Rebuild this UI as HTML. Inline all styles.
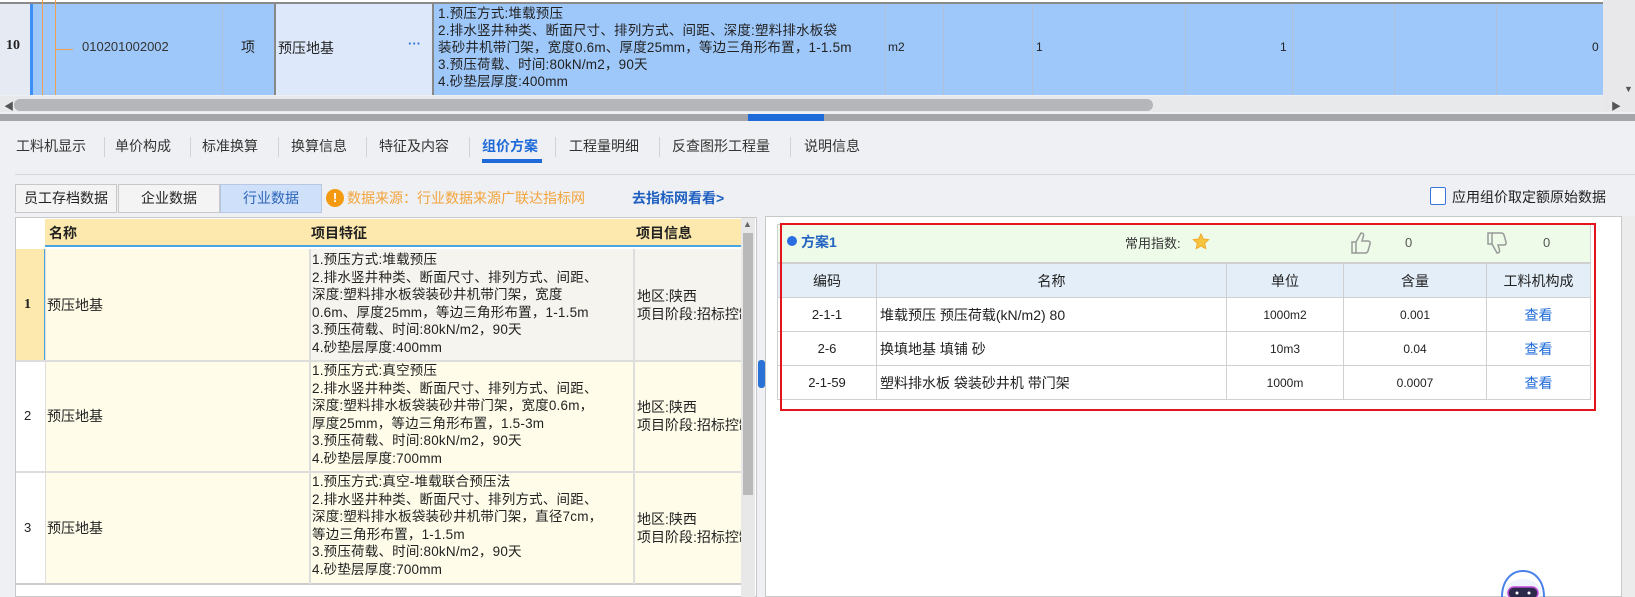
<!DOCTYPE html>
<html><head><meta charset="utf-8"><style>
*{margin:0;padding:0;box-sizing:border-box}
body{width:1635px;height:597px;overflow:hidden;background:#eef0f3;font-family:"Liberation Sans","Noto Sans CJK SC",sans-serif;font-size:13px;color:#222;position:relative}
.a{position:absolute}
.ft{font-size:13.5px;line-height:17.5px;white-space:nowrap;letter-spacing:0.2px}
.tab{position:absolute;top:136px;font-size:14px;color:#333}
.sep{position:absolute;top:137px;width:1px;height:20px;background:#cfd3d8}
table{border-collapse:collapse}
</style></head><body>
<!-- top grid -->
<div class="a" style="left:0;top:0;width:1603px;height:4px;background:#fff;border-bottom:2px solid #8a8a8a"></div>
<div class="a" style="left:0;top:4px;width:1603px;height:91px;background:#9fc8fa"></div>
<div class="a" style="left:0;top:4px;width:30px;height:91px;background:#e6ebf3"></div>
<div class="a" style="left:30px;top:4px;width:3px;height:91px;background:#3d8ff5"></div>
<div class="a" style="left:6px;top:38px;font-weight:bold;font-family:'Liberation Serif',serif;font-size:14px">10</div>
<div class="a" style="left:42px;top:0;width:1px;height:95px;background:#f0a050"></div>
<div class="a" style="left:55px;top:0;width:1px;height:95px;background:#f0a050"></div>
<div class="a" style="left:55px;top:49px;width:18px;height:1px;background:#f0a050"></div>
<div class="a" style="left:82px;top:39px;font-size:13px;color:#333">010201002002</div>
<div class="a" style="left:222px;top:4px;width:1px;height:91px;background:#b0c0d8"></div>
<div class="a" style="left:241px;top:37px;font-size:14px">项</div>
<div class="a" style="left:274px;top:4px;width:160px;height:91px;background:#dde8fb;border-left:2px solid #888;border-right:2px solid #888"></div>
<div class="a" style="left:278px;top:38px;font-size:14px">预压地基</div>
<div class="a" style="left:408px;top:36px;color:#3070d0;font-weight:bold">···</div>
<div class="a ft" style="left:438px;top:5px;line-height:17px;font-size:13.5px">1.预压方式:堆载预压<br>2.排水竖井种类、断面尺寸、排列方式、间距、深度:塑料排水板袋<br>装砂井机带门架，宽度0.6m、厚度25mm，等边三角形布置，1-1.5m<br>3.预压荷载、时间:80kN/m2，90天<br>4.砂垫层厚度:400mm</div>
<div class="a" style="left:885px;top:4px;width:1px;height:91px;background:#b0c0d8"></div>
<div class="a" style="left:888px;top:40px;font-size:12px">m2</div>
<div class="a" style="left:943px;top:4px;width:1px;height:91px;background:#b0c0d8"></div>
<div class="a" style="left:1032px;top:4px;width:1px;height:91px;background:#b0c0d8"></div>
<div class="a" style="left:1036px;top:40px;font-size:12px">1</div>
<div class="a" style="left:1185px;top:4px;width:1px;height:91px;background:#b0c0d8"></div>
<div class="a" style="left:1280px;top:40px;font-size:12px">1</div>
<div class="a" style="left:1292px;top:4px;width:1px;height:91px;background:#b0c0d8"></div>
<div class="a" style="left:1394px;top:4px;width:1px;height:91px;background:#b0c0d8"></div>
<div class="a" style="left:1496px;top:4px;width:1px;height:91px;background:#b0c0d8"></div>
<div class="a" style="left:1592px;top:40px;font-size:12px">0</div>
<div class="a" style="left:1603px;top:0;width:32px;height:112px;background:#e8e8ea"></div>
<div class="a" style="left:1624px;top:84px;color:#555;font-size:9px">▼</div>
<!-- h scrollbar -->
<div class="a" style="left:0;top:96px;width:1603px;height:16px;background:#e8e9eb"></div>
<div class="a" style="left:4px;top:98px;color:#555;font-size:10px">◀</div>
<div class="a" style="left:14px;top:99px;width:1139px;height:12px;background:#b4b6b9;border-radius:6px"></div>
<div class="a" style="left:1611px;top:98px;color:#555;font-size:10px">▶</div>
<div class="a" style="left:0;top:114px;width:1635px;height:7px;background:#a3a5a8"></div>
<div class="a" style="left:748px;top:114px;width:76px;height:7px;background:#1e6ad8"></div>
<!-- tabs -->
<div class="tab" style="left:16px">工料机显示</div><div class="sep" style="left:104px"></div>
<div class="tab" style="left:115px">单价构成</div><div class="sep" style="left:190px"></div>
<div class="tab" style="left:202px">标准换算</div><div class="sep" style="left:278px"></div>
<div class="tab" style="left:291px">换算信息</div><div class="sep" style="left:366px"></div>
<div class="tab" style="left:379px">特征及内容</div><div class="sep" style="left:469px"></div>
<div class="tab" style="left:482px;color:#1e6ad8;font-weight:bold">组价方案</div>
<div class="a" style="left:482px;top:159px;width:60px;height:4px;background:#1e6ad8"></div>
<div class="sep" style="left:555px"></div>
<div class="tab" style="left:569px">工程量明细</div><div class="sep" style="left:659px"></div>
<div class="tab" style="left:672px">反查图形工程量</div><div class="sep" style="left:790px"></div>
<div class="tab" style="left:804px">说明信息</div>
<div class="a" style="left:15px;top:174px;width:1620px;height:1px;background:#d4d7db"></div>
<!-- buttons -->
<div class="a" style="left:15px;top:184px;width:102px;height:29px;background:#f4f4f4;border:1px solid #c8c8c8;text-align:center;line-height:27px;font-size:14px">员工存档数据</div>
<div class="a" style="left:118px;top:184px;width:102px;height:29px;background:#f4f4f4;border:1px solid #c8c8c8;text-align:center;line-height:27px;font-size:14px">企业数据</div>
<div class="a" style="left:220px;top:184px;width:102px;height:29px;background:#cfe0fb;border:1px solid #b8c8e0;text-align:center;line-height:27px;font-size:14px;color:#2b64b8">行业数据</div>
<div class="a" style="left:326px;top:189px;width:18px;height:18px;border-radius:50%;background:#f39a12;color:#fff;font-weight:bold;text-align:center;line-height:18px;font-size:13px">!</div>
<div class="a" style="left:347px;top:188px;font-size:14px;color:#f3a43c">数据来源：行业数据来源广联达指标网</div>
<div class="a" style="left:632px;top:188px;font-size:14px;color:#1e5fc0;font-weight:bold">去指标网看看&gt;</div>
<div class="a" style="left:1430px;top:187px;width:16px;height:18px;border:1.5px solid #3a78d8;border-radius:2px;background:#fff"></div>
<div class="a" style="left:1452px;top:187px;font-size:14px;color:#222">应用组价取定额原始数据</div>
<!-- left panel -->
<div class="a" style="left:15px;top:217px;width:742px;height:380px;background:#fff;border:1px solid #c8c8c8"></div>
<div class="a" style="left:45px;top:219px;width:696px;height:28px;background:#fde9ad;border-bottom:2px solid #4aa6e0"></div>
<div class="a" style="left:49px;top:223px;font-weight:bold;font-size:14px">名称</div>
<div class="a" style="left:311px;top:223px;font-weight:bold;font-size:14px">项目特征</div>
<div class="a" style="left:636px;top:223px;font-weight:bold;font-size:14px">项目信息</div>
<!-- row1 -->
<div class="a" style="left:16px;top:249px;width:29px;height:111px;background:#fde9ad"></div>
<div class="a" style="left:44px;top:249px;width:2px;height:111px;background:#4aa6e0"></div>
<div class="a" style="left:46px;top:249px;width:264px;height:111px;background:#fffbe6"></div>
<div class="a" style="left:310px;top:249px;width:431px;height:111px;background:#f5f4ef"></div>
<!-- row2/3 -->
<div class="a" style="left:46px;top:361px;width:695px;height:222px;background:#fffdea"></div>
<div class="a" style="left:16px;top:360px;width:725px;height:2px;background:#ddd"></div>
<div class="a" style="left:16px;top:471px;width:725px;height:2px;background:#ddd"></div>
<div class="a" style="left:16px;top:583px;width:725px;height:2px;background:#ccc"></div>
<div class="a" style="left:45px;top:249px;width:1px;height:335px;background:#ddd"></div>
<div class="a" style="left:309px;top:249px;width:2px;height:335px;background:#ddd"></div>
<div class="a" style="left:633px;top:249px;width:2px;height:335px;background:#ddd"></div>
<div class="a" style="left:24px;top:297px;font-weight:bold;font-family:'Liberation Serif',serif;font-size:14px">1</div>
<div class="a" style="left:24px;top:408px;font-size:13px">2</div>
<div class="a" style="left:24px;top:520px;font-size:13px">3</div>
<div class="a" style="left:47px;top:295px;font-size:14px">预压地基</div>
<div class="a" style="left:47px;top:406px;font-size:14px">预压地基</div>
<div class="a" style="left:47px;top:518px;font-size:14px">预压地基</div>
<div class="a ft" style="left:312px;top:251px">1.预压方式:堆载预压<br>2.排水竖井种类、断面尺寸、排列方式、间距、<br>深度:塑料排水板袋装砂井机带门架，宽度<br>0.6m、厚度25mm，等边三角形布置，1-1.5m<br>3.预压荷载、时间:80kN/m2，90天<br>4.砂垫层厚度:400mm</div>
<div class="a ft" style="left:312px;top:362px">1.预压方式:真空预压<br>2.排水竖井种类、断面尺寸、排列方式、间距、<br>深度:塑料排水板袋装砂井带门架，宽度0.6m，<br>厚度25mm，等边三角形布置，1.5-3m<br>3.预压荷载、时间:80kN/m2，90天<br>4.砂垫层厚度:700mm</div>
<div class="a ft" style="left:312px;top:473px">1.预压方式:真空-堆载联合预压法<br>2.排水竖井种类、断面尺寸、排列方式、间距、<br>深度:塑料排水板袋装砂井机带门架，直径7cm，<br>等边三角形布置，1-1.5m<br>3.预压荷载、时间:80kN/m2，90天<br>4.砂垫层厚度:700mm</div>
<div class="a" style="left:637px;top:287px;width:104px;overflow:hidden;white-space:nowrap;font-size:14px;line-height:18px">地区:陕西<br>项目阶段:招标控制</div>
<div class="a" style="left:637px;top:398px;width:104px;overflow:hidden;white-space:nowrap;font-size:14px;line-height:18px">地区:陕西<br>项目阶段:招标控制</div>
<div class="a" style="left:637px;top:510px;width:104px;overflow:hidden;white-space:nowrap;font-size:14px;line-height:18px">地区:陕西<br>项目阶段:招标控制</div>
<div class="a" style="left:741px;top:218px;width:14px;height:379px;background:#e8e8e8"></div>
<div class="a" style="left:743px;top:233px;width:10px;height:262px;background:#b9b9b9"></div>
<div class="a" style="left:743px;top:219px;font-size:9px;color:#666">▲</div>
<div class="a" style="left:758px;top:360px;width:7px;height:28px;background:#2a72d8;border-radius:3px"></div>
<!-- right panel -->
<div class="a" style="left:765px;top:216px;width:857px;height:381px;background:#fff;border:1px solid #c8c8c8"></div>
<div class="a" style="left:1622px;top:216px;width:13px;height:381px;background:#ececec"></div>
<div class="a" style="left:777px;top:224px;width:814px;height:39px;background:#eefbe9;border:1px solid #d0d0d0"></div>
<div class="a" style="left:787px;top:236px;width:10px;height:10px;border-radius:50%;background:#2a6ee0"></div>
<div class="a" style="left:801px;top:232px;font-weight:bold;color:#2364c0;font-size:14px">方案1</div>
<div class="a" style="left:1125px;top:233px;font-size:13px;color:#333">常用指数:</div>
<svg class="a" style="left:1192px;top:233px" width="18" height="18" viewBox="0 0 20 20"><path d="M10 1l2.6 5.6 6 .7-4.5 4.1 1.2 6-5.3-3-5.3 3 1.2-6L1.4 7.3l6-.7z" fill="#f8c540" stroke="#f1a526"/></svg>
<svg class="a" style="left:1350px;top:231px" width="22" height="24" viewBox="0 0 22 24" fill="none" stroke="#999" stroke-width="1.5"><path d="M2 11h4v11H2z"/><path d="M6 11l5-9c2 0 3 1 2.5 3L12 10h6c2 0 2.5 2 2 3l-2 7c-.5 1.5-1.5 2-3 2H6"/></svg>
<div class="a" style="left:1405px;top:235px;font-size:13px;color:#555">0</div>
<svg class="a" style="left:1486px;top:231px" width="22" height="24" viewBox="0 0 22 24" fill="none" stroke="#999" stroke-width="1.5"><path d="M2 2h4v11H2z"/><path d="M6 13l5 9c2 0 3-1 2.5-3L12 14h6c2 0 2.5-2 2-3l-2-7c-.5-1.5-1.5-2-3-2H6"/></svg>
<div class="a" style="left:1543px;top:235px;font-size:13px;color:#555">0</div>
<table class="a" style="left:777px;top:263px;width:814px;font-size:13px;text-align:center">
<tr style="height:34px;background:#e3eef8"><td style="width:99px;border:1px solid #d0d0d0;font-size:14px">编码</td><td style="width:350px;border:1px solid #d0d0d0;font-size:14px">名称</td><td style="width:117px;border:1px solid #d0d0d0;font-size:14px">单位</td><td style="width:143px;border:1px solid #d0d0d0;font-size:14px">含量</td><td style="border:1px solid #d0d0d0;font-size:14px">工料机构成</td></tr>
<tr style="height:34px"><td style="border:1px solid #d0d0d0">2-1-1</td><td style="border:1px solid #d0d0d0;text-align:left;padding-left:3px;font-size:14px">堆载预压 预压荷载(kN/m2) 80</td><td style="border:1px solid #d0d0d0;font-size:12px">1000m2</td><td style="border:1px solid #d0d0d0;font-size:12px">0.001</td><td style="border:1px solid #d0d0d0;color:#1e6ad8;font-size:14px">查看</td></tr>
<tr style="height:34px"><td style="border:1px solid #d0d0d0">2-6</td><td style="border:1px solid #d0d0d0;text-align:left;padding-left:3px;font-size:14px">换填地基 填铺 砂</td><td style="border:1px solid #d0d0d0;font-size:12px">10m3</td><td style="border:1px solid #d0d0d0;font-size:12px">0.04</td><td style="border:1px solid #d0d0d0;color:#1e6ad8;font-size:14px">查看</td></tr>
<tr style="height:34px"><td style="border:1px solid #d0d0d0">2-1-59</td><td style="border:1px solid #d0d0d0;text-align:left;padding-left:3px;font-size:14px">塑料排水板 袋装砂井机 带门架</td><td style="border:1px solid #d0d0d0;font-size:12px">1000m</td><td style="border:1px solid #d0d0d0;font-size:12px">0.0007</td><td style="border:1px solid #d0d0d0;color:#1e6ad8;font-size:14px">查看</td></tr>
</table>
<div class="a" style="left:780px;top:223px;width:816px;height:188px;border:2px solid #e3141e"></div>
<!-- robot -->
<svg class="a" style="left:1495px;top:568px" width="56" height="29" viewBox="0 0 56 29"><path d="M7 29C7 13 16 3 28 3s21 10 21 26" fill="none" stroke="#4a80ea" stroke-width="2"/><ellipse cx="28" cy="24" rx="18" ry="13" fill="#eef2fd"/><rect x="13" y="19" width="30" height="12" rx="6" fill="#2b2a4a" stroke="#c04ad8" stroke-width="1.5"/><circle cx="22" cy="25" r="1.5" fill="#fff"/><circle cx="34" cy="25" r="1.5" fill="#fff"/></svg>
</body></html>
